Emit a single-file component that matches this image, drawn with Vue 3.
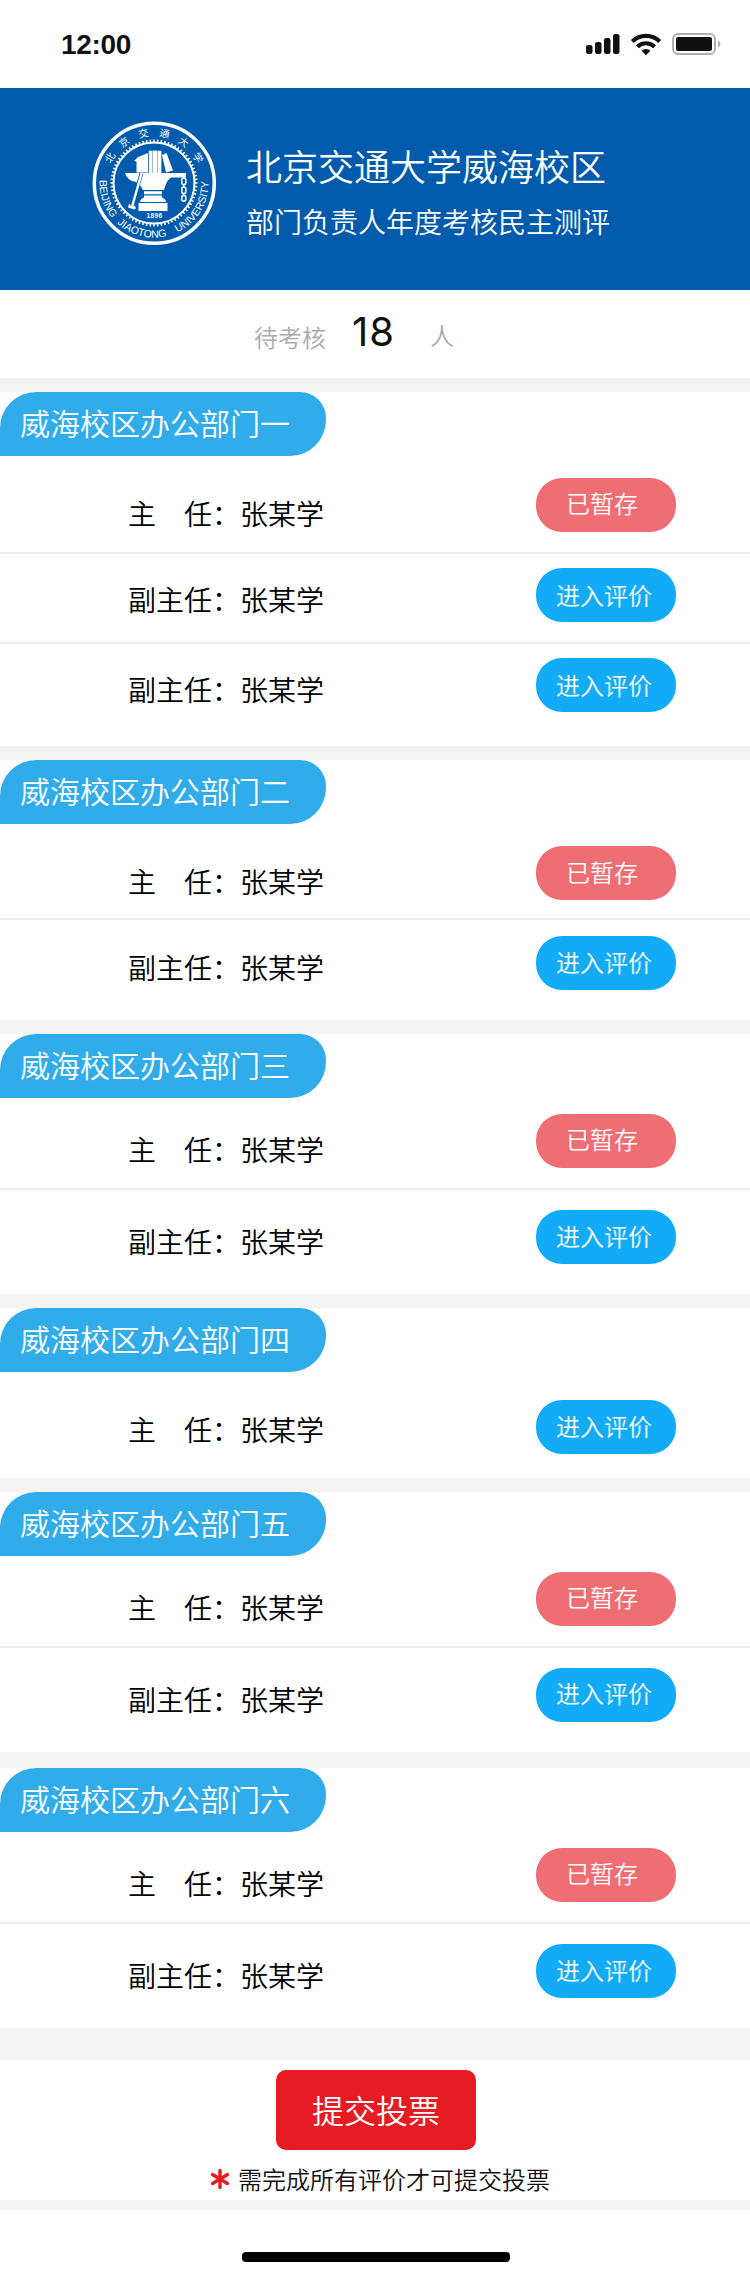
<script setup>
const save = '已暂存'
const go = '进入评价'
const chief = '主　任：张某学'
const vice = '副主任：张某学'

// Each row: h = height incl. divider, t = label centre, b = button top, n = caption nudge
const departments = [
  { name: '威海校区办公部门一', gap: 14, rows: [
    { label: chief, text: save, h: 98, t: 58, b: 22, n: -1 },
    { label: vice, text: go, h: 90, t: 46, b: 14, n: 1 },
    { label: vice, text: go, h: 102, t: 46, b: 14, n: 1 } ] },
  { name: '威海校区办公部门二', gap: 14, rows: [
    { label: chief, text: save, h: 96, t: 58, b: 22, n: 0 },
    { label: vice, text: go, h: 100, t: 48, b: 16, n: 0 } ] },
  { name: '威海校区办公部门三', gap: 14, rows: [
    { label: chief, text: save, h: 92, t: 52, b: 16, n: -1 },
    { label: vice, text: go, h: 104, t: 52, b: 20, n: 0 } ] },
  { name: '威海校区办公部门四', gap: 14, rows: [
    { label: chief, text: go, h: 106, t: 58, b: 28, n: 0 } ] },
  { name: '威海校区办公部门五', gap: 16, rows: [
    { label: chief, text: save, h: 92, t: 52, b: 16, n: -1 },
    { label: vice, text: go, h: 104, t: 52, b: 20, n: -1 } ] },
  { name: '威海校区办公部门六', gap: 32, rows: [
    { label: chief, text: save, h: 92, t: 52, b: 16, n: -1 },
    { label: vice, text: go, h: 104, t: 52, b: 20, n: 0 } ] },
]

const teeth = Array.from({ length: 72 }, (_, i) => i * 5)
const sealChars = [...'北京交通大学'].map((c, i) => ({ c, a: -60 + i * 24 }))
</script>

<template>
  <div class="page">
    <div class="status">
      <span class="time">12:00</span>
      <svg class="status-icons" width="136" height="26" viewBox="0 0 136 26">
        <g fill="#111">
          <rect x="0" y="13" width="6.500" height="9" rx="2.200" />
          <rect x="9" y="10" width="6.500" height="12" rx="2.200" />
          <rect x="18" y="6" width="6.500" height="16" rx="2.200" />
          <rect x="27" y="2" width="6.500" height="20" rx="2.200" />
          <path d="M55.600 18.800 a6 6 0 0 1 8.800 0 L60 23.200z" />
        </g>
        <g fill="none" stroke="#111" stroke-width="4.200">
          <path d="M46.300 9.400 a19.800 19.800 0 0 1 27.400 0" />
          <path d="M51.400 14.700 a12.400 12.400 0 0 1 17.200 0" />
        </g>
        <rect x="87" y="2" width="42" height="20" rx="5" fill="none" stroke="#b0b0b0" stroke-width="2" />
        <rect x="90" y="5" width="36" height="14" rx="2" fill="#111" />
        <path d="M132 8.500 q2.500 1 2.500 3.500 t-2.500 3.500z" fill="#b0b0b0" />
      </svg>
    </div>

    <header class="banner">
      <svg class="logo" width="126" height="126" viewBox="0 0 126 126">
        <defs>
          <path id="arc-bottom" d="M11.800 44.400 A54.500 54.500 0 1 0 114.200 44.400" />
        </defs>
        <circle cx="63.300" cy="63.300" r="60" fill="none" stroke="#fff" stroke-width="3.500" />
        <circle cx="63" cy="63" r="40.500" fill="none" stroke="#fff" stroke-width="2" />
        <g stroke="#fff" stroke-width="1.500">
          <line v-for="a in teeth" :key="a" x1="63" y1="19.500" x2="63" y2="22.500" :transform="`rotate(${a} 63 63)`" />
        </g>
        <text
          v-for="s in sealChars"
          :key="s.c"
          class="seal-cn"
          x="63"
          y="16"
          text-anchor="middle"
          :transform="`rotate(${s.a} 63 63)`"
        >{{ s.c }}</text>
        <text class="seal-en"><textPath href="#arc-bottom" startOffset="16">BEIJING</textPath></text>
        <text class="seal-en"><textPath href="#arc-bottom" startOffset="64">JIAOTONG</textPath></text>
        <text class="seal-en"><textPath href="#arc-bottom" startOffset="128.4">UNIVERSITY</textPath></text>
        <g fill="#fff">
          <path d="M43 41 l4 -4 l10 -4 v19.500 h-11.500 v-11z" />
          <path d="M57.800 30.700 h3.800 v22.500 h-3.800z M62 30.500 h4.200 v22.700 h-4.200z M66.600 30.700 h3.800 v22.500 h-3.800z" />
          <path d="M71 35 l4.500 -2 l6.500 17.500 l-7 2z" />
          <path d="M34 53 H95 V57.500 H80 Q75 61 73 70 H52 Q49 64 45 62 Q36 60.500 34 53z" />
          <path d="M53 71.200 h18 v3 h-18z M53 75.500 h18 v2 q3.500 1 4 4.500 h-26 q.5 -3.500 4 -4.500z M47.500 83 h29 v8 h-29z" />
          <path d="M38 84 l5.500 1.500 l1.500 2.500 l-1.500 1.500 l-6.500 -2z" />
        </g>
        <line x1="50.500" y1="53" x2="41" y2="86" stroke="#005bac" stroke-width="3.800" />
        <line x1="50.800" y1="52.500" x2="41" y2="87" stroke="#fff" stroke-width="2.400" />
        <g fill="none" stroke="#fff" stroke-width="1.500">
          <rect x="90.800" y="58" width="4" height="6.500" rx="1.800" />
          <rect x="90.800" y="67" width="4" height="6.500" rx="1.800" />
          <rect x="90.800" y="75.500" width="4" height="5.500" rx="1.800" />
          <path d="M92.800 64 v4 M92.800 73 v3" />
        </g>
        <text class="seal-year" x="63.500" y="97.500" text-anchor="middle">1896</text>
      </svg>
      <div class="banner-text">
        <h1>北京交通大学威海校区</h1>
        <p>部门负责人年度考核民主测评</p>
      </div>
    </header>

    <div class="summary">
      <span class="muted pending">待考核</span>
      <span class="count">18</span>
      <span class="muted unit">人</span>
    </div>
    <div class="gap first-gap"></div>

    <template v-for="d in departments" :key="d.name">
      <section class="dept">
        <h2>{{ d.name }}</h2>
        <div v-for="(r, i) in d.rows" :key="i" class="row" :style="{ height: r.h + 'px' }">
          <span class="label" :style="{ marginTop: r.t - 21 + 'px' }">{{ r.label }}</span>
          <button
            :class="['action', { saved: r.text === save }]"
            :style="{ marginTop: r.b + 'px', lineHeight: 52 + 2 * r.n + 'px' }"
          >{{ r.text }}</button>
        </div>
      </section>
      <div class="gap" :style="{ height: d.gap + 'px' }"></div>
    </template>

    <footer class="submit-area">
      <button class="submit">提交投票</button>
      <div class="hint">
        <svg width="20" height="22" viewBox="0 0 20 22">
          <path d="M10 2.500 V19.500 M2.500 6.500 L17.500 15.500 M17.500 6.500 L2.500 15.500" stroke="#e61b23" stroke-width="3.400" stroke-linecap="round" />
        </svg>
        <span>需完成所有评价才可提交投票</span>
      </div>
    </footer>
    <div class="gap last-gap"></div>
    <div class="home"><i></i></div>
  </div>
</template>

<style>
body { margin: 0; background: #fff; }
</style>

<style scoped>
.page {
  width: 750px;
  height: 2278px;
  background: #fff;
  font-family: "Noto Sans CJK SC", sans-serif;
  font-weight: 350;
  color: #000;
  overflow: hidden;
}
.status {
  height: 88px;
  box-sizing: border-box;
  padding: 32px 28px 0 61px;
  display: flex;
  justify-content: space-between;
  align-items: flex-start;
}
.time {
  font: 700 28px/26px "Liberation Sans", Arial, sans-serif;
  letter-spacing: -.3px;
  color: #111;
}
.status-icons { display: block; }
.banner {
  height: 202px;
  background: #005bac;
  color: #fff;
  display: flex;
}
.logo { margin: 32px 0 0 91px; flex: none; }
.seal-cn { font-size: 10px; fill: #fff; font-weight: 400; }
.seal-en { font: 400 10.500px "Liberation Sans", Arial, sans-serif; fill: #fff; }
.seal-year { font: 700 6.500px "Liberation Sans", Arial, sans-serif; fill: #fff; letter-spacing: .4px; }
.banner-text { margin: 52px 0 0 29px; }
h1, h2, p { margin: 0; font-weight: 350; white-space: nowrap; }
h1 { font-size: 36px; line-height: 50px; }
p { font-size: 28px; line-height: 40px; margin-top: 11px; }
.summary { height: 88px; display: flex; }
.muted { font-size: 24px; line-height: 34px; color: #aaa; }
.pending { margin: 30px 0 0 254px; width: 72px; }
.count {
  margin: 18px 0 0 26px;
  width: 78px;
  font: 400 40px/48px Inter, "Liberation Sans", sans-serif;
  letter-spacing: 1px;
  color: #111;
}
.unit { margin-top: 28px; }
.gap { background: #f3f3f3; }
.first-gap { height: 14px; }
.last-gap { height: 10px; }
h2 {
  width: 306px;
  height: 64px;
  padding-left: 20px;
  background: #31aceb;
  border-radius: 36px 26px 36px 0;
  color: #fff;
  font-size: 30px;
  line-height: 60px;
}
.row {
  display: flex;
  justify-content: space-between;
  align-items: flex-start;
  box-sizing: border-box;
  padding: 0 74px 0 128px;
  border-bottom: 2px solid #ebebeb;
}
.row:last-child { border-bottom: 0; }
.label { font-size: 28px; line-height: 40px; white-space: nowrap; }
button {
  border: 0;
  padding: 0;
  margin: 0;
  color: #fff;
  font-family: inherit;
  font-weight: 350;
}
.action {
  display: flex;
  justify-content: center;
  align-items: flex-start;
  width: 140px;
  height: 54px;
  border-radius: 26px;
  background: #12abf8;
  font-size: 24px;
}
.saved { background: #ee6e73; padding-right: 8px; }
.action:not(.saved) { padding-right: 4px; }
.submit-area {
  height: 140px;
  display: flex;
  flex-direction: column;
  align-items: center;
}
.submit {
  margin: 10px 0 0 2px;
  width: 200px;
  height: 80px;
  border-radius: 10px;
  background: #e61b23;
  font-size: 32px;
  line-height: 76px;
  padding-bottom: 2px;
}
.hint {
  margin-top: 12px;
  display: flex;
  align-items: center;
  gap: 8px;
  margin-left: 10px;
  font-size: 24px;
  line-height: 34px;
  color: #111;
}
.home { height: 68px; display: flex; }
.home i { width: 268px; height: 10px; margin: 42px 0 0 242px; border-radius: 4px; background: #000; }
</style>
